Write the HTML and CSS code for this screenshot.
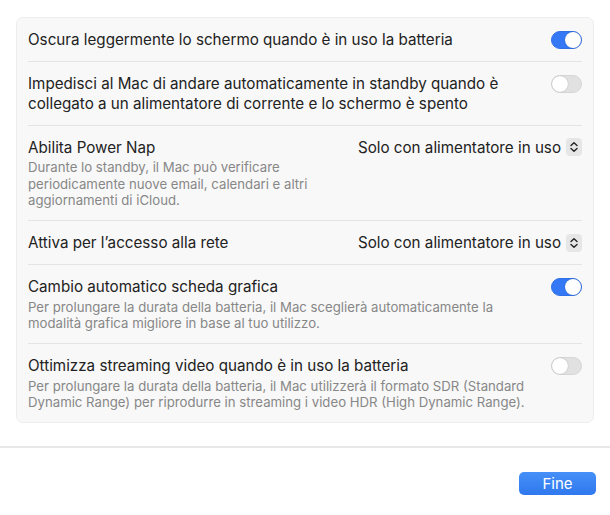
FILE: index.html
```html
<!DOCTYPE html>
<html lang="it">
<head>
    <meta charset="UTF-8">
    <meta name="viewport" content="width=device-width, initial-scale=1.0">
    <title>Batteria</title>
    <link rel="stylesheet" href="styles.css">
</head>
<body>
    <div class="panel">
        <div class="card">
            <div class="row">
                <div class="text">
                    <div class="title">Oscura leggermente lo schermo quando è in uso la batteria</div>
                </div>
                <span class="switch on"></span>
            </div>
            <div class="row">
                <div class="text">
                    <div class="title">Impedisci al Mac di andare automaticamente in standby quando è<br>collegato a un alimentatore di corrente e lo schermo è spento</div>
                </div>
                <span class="switch"></span>
            </div>
            <div class="row">
                <div class="text">
                    <div class="title">Abilita Power Nap</div>
                    <div class="desc">Durante lo standby, il Mac può verificare<br>periodicamente nuove email, calendari e altri<br>aggiornamenti di iCloud.</div>
                </div>
                <div class="popup">
                    <span>Solo con alimentatore in uso</span>
                    <span class="stepper">
                        <svg width="10" height="12" viewBox="0 0 10 12"><path d="M2 4.5 L5 1.8 L8 4.5 M2 7.5 L5 10.2 L8 7.5" fill="none" stroke="#222" stroke-width="1.4" stroke-linecap="round" stroke-linejoin="round"/></svg>
                    </span>
                </div>
            </div>
            <div class="row">
                <div class="text">
                    <div class="title">Attiva per l’accesso alla rete</div>
                </div>
                <div class="popup">
                    <span>Solo con alimentatore in uso</span>
                    <span class="stepper">
                        <svg width="10" height="12" viewBox="0 0 10 12"><path d="M2 4.5 L5 1.8 L8 4.5 M2 7.5 L5 10.2 L8 7.5" fill="none" stroke="#222" stroke-width="1.4" stroke-linecap="round" stroke-linejoin="round"/></svg>
                    </span>
                </div>
            </div>
            <div class="row">
                <div class="text">
                    <div class="title">Cambio automatico scheda grafica</div>
                    <div class="desc">Per prolungare la durata della batteria, il Mac sceglierà automaticamente la<br>modalità grafica migliore in base al tuo utilizzo.</div>
                </div>
                <span class="switch on"></span>
            </div>
            <div class="row">
                <div class="text">
                    <div class="title">Ottimizza streaming video quando è in uso la batteria</div>
                    <div class="desc">Per prolungare la durata della batteria, il Mac utilizzerà il formato SDR (Standard<br>Dynamic Range) per riprodurre in streaming i video HDR (High Dynamic Range).</div>
                </div>
                <span class="switch"></span>
            </div>
        </div>
    </div>
    <div class="footer">
        <button class="done">Fine</button>
    </div>
</body>
</html>
```

FILE: styles.css
```css
* {
    margin: 0;
    padding: 0;
    box-sizing: border-box;
}
body {
    width: 610px;
    height: 515px;
    background-color: #fff;
    font-family: "Inter", "Liberation Sans", sans-serif;
    color: #222;
    overflow: hidden;
}
.panel {
    padding: 17px 16px 0 16px;
}
.card {
    background-color: #f8f8f8;
    border: 1px solid #ededed;
    border-radius: 7px;
    padding: 0 11px;
}
.row {
    display: flex;
    justify-content: space-between;
    align-items: flex-start;
    padding: 12px 0 11.5px 0;
    border-bottom: 1px solid #e4e4e4;
}
.row:last-child {
    border-bottom: none;
}
.title {
    font-size: 15.2px;
    line-height: 19.5px;
}
.desc {
    font-size: 13.2px;
    line-height: 16.5px;
    color: #878787;
    margin-top: 2px;
}
.switch {
    flex: none;
    position: relative;
    width: 31px;
    height: 18px;
    margin-top: 1px;
    border-radius: 9px;
    background-color: #e1e1e1;
    border: 1px solid #d6d6d6;
}
.switch::after {
    content: "";
    position: absolute;
    top: 0;
    left: 0;
    width: 16px;
    height: 16px;
    border-radius: 50%;
    background-color: #fff;
    box-shadow: 0 0 1px rgba(0, 0, 0, 0.35);
}
.switch.on {
    background-color: #3478f6;
    border-color: #3070e6;
}
.switch.on::after {
    left: 13px;
}
.popup {
    flex: none;
    display: flex;
    align-items: center;
    gap: 5px;
    font-size: 15.2px;
    line-height: 19.5px;
}
.stepper {
    display: flex;
    align-items: center;
    justify-content: center;
    width: 16px;
    height: 18px;
    border-radius: 4px;
    background-color: #e6e6e6;
}
.footer {
    margin-top: 23px;
    border-top: 2px solid #e8e8e8;
    display: flex;
    justify-content: flex-end;
    padding: 24px 14px 0 0;
}
.done {
    width: 77px;
    height: 23px;
    border: none;
    border-radius: 5px;
    background: linear-gradient(#4690f8, #2f78ee);
    color: #fff;
    font-family: "Inter", "Liberation Sans", sans-serif;
    font-size: 15px;
}
```
